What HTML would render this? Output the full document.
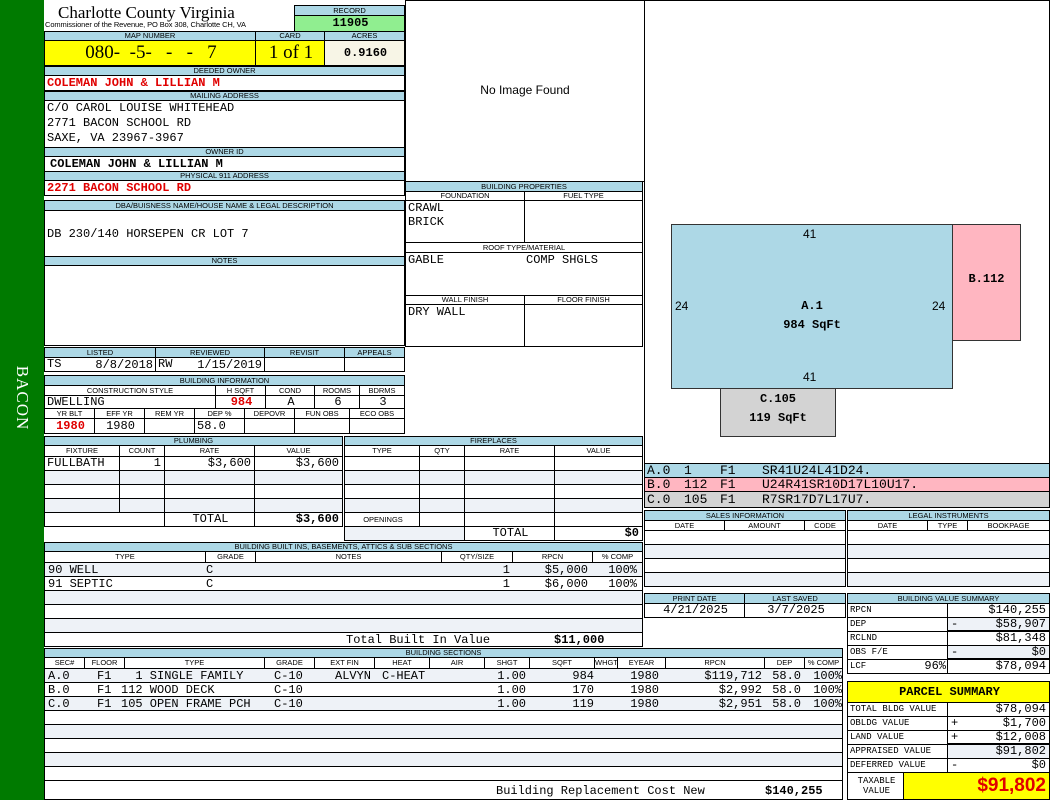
<!DOCTYPE html>
<html><head><meta charset="utf-8"><style>
*{margin:0;padding:0}
body{width:1050px;height:800px;position:relative;background:#fff;overflow:hidden;font-family:"Liberation Sans",sans-serif}
.h,.c,.t{position:absolute;box-sizing:border-box}
.h{background:#add8e6;border:1px solid #000;font-size:7.5px;text-align:center;color:#000;white-space:nowrap;overflow:hidden}
.c{border:1px solid #000;background:#fff;font:12px "Liberation Mono",monospace;white-space:pre;overflow:hidden;padding-left:2px}
.g{background:#eef2f7}
.t{white-space:pre;font:12px "Liberation Mono",monospace}
.r{text-align:right;padding-right:3px}
.ct{text-align:center}
.red{color:#e00000;font-weight:bold}
.b{font-weight:bold}
.s{font-size:9px}
</style></head><body>
<div class="t" style="left:0;top:0;width:44px;height:800px;background:#007a00"></div>
<div class="t" style="left:22px;top:398px;transform:translate(-50%,-50%) rotate(90deg);color:#fff;font:17px 'Liberation Serif',serif;letter-spacing:1px">BACON</div>

<div class="t" style="left:58px;top:3px;font:17px 'Liberation Serif',serif">Charlotte County Virginia</div>
<div class="t" style="left:45px;top:20px;font:7.5px 'Liberation Sans',sans-serif;letter-spacing:-0.1px">Commissioner of the Revenue, PO Box 308, Charlotte CH, VA</div>
<div class="h" style="left:294px;top:5px;width:111px;height:11px;line-height:9px">RECORD</div>
<div class="c ct" style="left:294px;top:15px;width:111px;height:17px;background:#90ee90;font-weight:bold;font-size:12px;line-height:15px">11905</div>

<div class="h" style="left:44px;top:31px;width:212px;height:10px;line-height:8px">MAP NUMBER</div>
<div class="h" style="left:255px;top:31px;width:70px;height:10px;line-height:8px">CARD</div>
<div class="h" style="left:324px;top:31px;width:81px;height:10px;line-height:8px">ACRES</div>
<div class="c ct" style="left:44px;top:40px;width:212px;height:26px;background:#ffff00;font:19px 'Liberation Serif',serif;line-height:24px">080-  -5-   -   -   7</div>
<div class="c ct" style="left:255px;top:40px;width:70px;height:26px;background:#ffff00;font:19px 'Liberation Serif',serif;line-height:24px">1 of 1</div>
<div class="c ct" style="left:324px;top:40px;width:81px;height:26px;background:#f7f5e6;font-weight:bold;line-height:24px">0.9160</div>

<div class="h" style="left:44px;top:66px;width:361px;height:10px;line-height:8px">DEEDED OWNER</div>
<div class="c red" style="left:44px;top:75px;width:361px;height:16px;line-height:14px">COLEMAN JOHN &amp; LILLIAN M</div>
<div class="h" style="left:44px;top:91px;width:361px;height:10px;line-height:8px">MAILING ADDRESS</div>
<div class="c" style="left:44px;top:100px;width:361px;height:48px;line-height:15px">C/O CAROL LOUISE WHITEHEAD
2771 BACON SCHOOL RD
SAXE, VA 23967-3967</div>
<div class="h" style="left:44px;top:147px;width:361px;height:10px;line-height:8px">OWNER ID</div>
<div class="c b" style="left:44px;top:156px;width:361px;height:16px;line-height:14px;padding-left:5px">COLEMAN JOHN &amp; LILLIAN M</div>
<div class="h" style="left:44px;top:171px;width:361px;height:10px;line-height:8px">PHYSICAL 911 ADDRESS</div>
<div class="c red" style="left:44px;top:180px;width:361px;height:16px;line-height:14px">2271 BACON SCHOOL RD</div>

<div class="h" style="left:44px;top:200px;width:361px;height:11px;line-height:9px">DBA/BUISNESS NAME/HOUSE NAME &amp; LEGAL DESCRIPTION</div>
<div class="c" style="left:44px;top:210px;width:361px;height:47px;line-height:47px">DB 230/140 HORSEPEN CR LOT 7</div>
<div class="h" style="left:44px;top:256px;width:361px;height:10px;line-height:8px">NOTES</div>
<div class="c" style="left:44px;top:265px;width:361px;height:81px"></div>

<div class="h" style="left:44px;top:347px;width:112px;height:11px;line-height:9px">LISTED</div>
<div class="h" style="left:155px;top:347px;width:110px;height:11px;line-height:9px">REVIEWED</div>
<div class="h" style="left:264px;top:347px;width:81px;height:11px;line-height:9px">REVISIT</div>
<div class="h" style="left:344px;top:347px;width:61px;height:11px;line-height:9px">APPEALS</div>
<div class="c" style="left:44px;top:357px;width:112px;height:15px;line-height:13px">TS</div>
<div class="t" style="right:897px;top:358px">8/8/2018</div>
<div class="c" style="left:155px;top:357px;width:110px;height:15px;line-height:13px">RW</div>
<div class="t" style="right:788px;top:358px">1/15/2019</div>
<div class="c" style="left:264px;top:357px;width:81px;height:15px"></div>
<div class="c" style="left:344px;top:357px;width:61px;height:15px"></div>

<div class="h" style="left:44px;top:375px;width:361px;height:11px;line-height:9px">BUILDING INFORMATION</div>
<div class="h" style="left:44px;top:385px;width:172px;height:11px;line-height:9px;background:#fff">CONSTRUCTION STYLE</div>
<div class="h" style="left:215px;top:385px;width:51px;height:11px;line-height:9px;background:#fff">H SQFT</div>
<div class="h" style="left:265px;top:385px;width:50px;height:11px;line-height:9px;background:#fff">COND</div>
<div class="h" style="left:314px;top:385px;width:46px;height:11px;line-height:9px;background:#fff">ROOMS</div>
<div class="h" style="left:359px;top:385px;width:46px;height:11px;line-height:9px;background:#fff">BDRMS</div>
<div class="c" style="left:44px;top:395px;width:172px;height:14px;line-height:12px">DWELLING</div>
<div class="c ct red" style="left:215px;top:395px;width:51px;height:14px;line-height:12px">984</div>
<div class="c ct" style="left:265px;top:395px;width:50px;height:14px;line-height:12px">A</div>
<div class="c ct" style="left:314px;top:395px;width:46px;height:14px;line-height:12px">6</div>
<div class="c ct" style="left:359px;top:395px;width:46px;height:14px;line-height:12px">3</div>
<div class="h" style="left:44px;top:408px;width:51px;height:11px;line-height:9px;background:#fff">YR BLT</div>
<div class="h" style="left:94px;top:408px;width:51px;height:11px;line-height:9px;background:#fff">EFF YR</div>
<div class="h" style="left:144px;top:408px;width:51px;height:11px;line-height:9px;background:#fff">REM YR</div>
<div class="h" style="left:194px;top:408px;width:51px;height:11px;line-height:9px;background:#fff">DEP %</div>
<div class="h" style="left:244px;top:408px;width:51px;height:11px;line-height:9px;background:#fff">DEPOVR</div>
<div class="h" style="left:294px;top:408px;width:56px;height:11px;line-height:9px;background:#fff">FUN OBS</div>
<div class="h" style="left:349px;top:408px;width:56px;height:11px;line-height:9px;background:#fff">ECO OBS</div>
<div class="c ct red" style="left:44px;top:418px;width:51px;height:16px;line-height:14px">1980</div>
<div class="c ct" style="left:94px;top:418px;width:51px;height:16px;line-height:14px">1980</div>
<div class="c" style="left:144px;top:418px;width:51px;height:16px"></div>
<div class="c" style="left:194px;top:418px;width:51px;height:16px;line-height:14px">58.0</div>
<div class="c" style="left:244px;top:418px;width:51px;height:16px"></div>
<div class="c" style="left:294px;top:418px;width:56px;height:16px"></div>
<div class="c" style="left:349px;top:418px;width:56px;height:16px"></div>

<div class="h" style="left:44px;top:436px;width:299px;height:10px;line-height:8px">PLUMBING</div>
<div class="h" style="left:44px;top:445px;width:76px;height:12px;line-height:10px;background:#fff">FIXTURE</div>
<div class="h" style="left:119px;top:445px;width:46px;height:12px;line-height:10px;background:#fff">COUNT</div>
<div class="h" style="left:164px;top:445px;width:91px;height:12px;line-height:10px;background:#fff">RATE</div>
<div class="h" style="left:254px;top:445px;width:89px;height:12px;line-height:10px;background:#fff">VALUE</div>
<div class="c" style="left:44px;top:456px;width:76px;height:15px;line-height:13px">FULLBATH</div>
<div class="c r" style="left:119px;top:456px;width:46px;height:15px;line-height:13px">1</div>
<div class="c r" style="left:164px;top:456px;width:91px;height:15px;line-height:13px">$3,600</div>
<div class="c r" style="left:254px;top:456px;width:89px;height:15px;line-height:13px">$3,600</div>
<div class="c g" style="left:44px;top:470px;width:76px;height:15px"></div><div class="c g" style="left:119px;top:470px;width:46px;height:15px"></div><div class="c g" style="left:164px;top:470px;width:91px;height:15px"></div><div class="c g" style="left:254px;top:470px;width:89px;height:15px"></div>
<div class="c" style="left:44px;top:484px;width:76px;height:15px"></div><div class="c" style="left:119px;top:484px;width:46px;height:15px"></div><div class="c" style="left:164px;top:484px;width:91px;height:15px"></div><div class="c" style="left:254px;top:484px;width:89px;height:15px"></div>
<div class="c g" style="left:44px;top:498px;width:76px;height:15px"></div><div class="c g" style="left:119px;top:498px;width:46px;height:15px"></div><div class="c g" style="left:164px;top:498px;width:91px;height:15px"></div><div class="c g" style="left:254px;top:498px;width:89px;height:15px"></div>
<div class="c" style="left:44px;top:512px;width:121px;height:15px"></div>
<div class="c ct" style="left:164px;top:512px;width:91px;height:15px;line-height:13px">TOTAL</div>
<div class="c r b" style="left:254px;top:512px;width:89px;height:15px;line-height:13px">$3,600</div>

<div class="h" style="left:344px;top:436px;width:299px;height:10px;line-height:8px">FIREPLACES</div>
<div class="h" style="left:344px;top:445px;width:76px;height:12px;line-height:10px;background:#fff">TYPE</div>
<div class="h" style="left:419px;top:445px;width:46px;height:12px;line-height:10px;background:#fff">QTY</div>
<div class="h" style="left:464px;top:445px;width:91px;height:12px;line-height:10px;background:#fff">RATE</div>
<div class="h" style="left:554px;top:445px;width:89px;height:12px;line-height:10px;background:#fff">VALUE</div>
<div class="c" style="left:344px;top:456px;width:76px;height:15px"></div><div class="c" style="left:419px;top:456px;width:46px;height:15px"></div><div class="c" style="left:464px;top:456px;width:91px;height:15px"></div><div class="c" style="left:554px;top:456px;width:89px;height:15px"></div>
<div class="c g" style="left:344px;top:470px;width:76px;height:15px"></div><div class="c g" style="left:419px;top:470px;width:46px;height:15px"></div><div class="c g" style="left:464px;top:470px;width:91px;height:15px"></div><div class="c g" style="left:554px;top:470px;width:89px;height:15px"></div>
<div class="c" style="left:344px;top:484px;width:76px;height:15px"></div><div class="c" style="left:419px;top:484px;width:46px;height:15px"></div><div class="c" style="left:464px;top:484px;width:91px;height:15px"></div><div class="c" style="left:554px;top:484px;width:89px;height:15px"></div>
<div class="c g" style="left:344px;top:498px;width:76px;height:15px"></div><div class="c g" style="left:419px;top:498px;width:46px;height:15px"></div><div class="c g" style="left:464px;top:498px;width:91px;height:15px"></div><div class="c g" style="left:554px;top:498px;width:89px;height:15px"></div>
<div class="c ct" style="left:344px;top:512px;width:76px;height:15px;font:7.5px 'Liberation Sans';line-height:13px">OPENINGS</div><div class="c" style="left:419px;top:512px;width:46px;height:15px"></div><div class="c" style="left:464px;top:512px;width:91px;height:15px"></div><div class="c" style="left:554px;top:512px;width:89px;height:15px"></div>
<div class="c g" style="left:344px;top:526px;width:121px;height:15px"></div>
<div class="c ct" style="left:464px;top:526px;width:91px;height:15px;line-height:13px">TOTAL</div>
<div class="c r b" style="left:554px;top:526px;width:89px;height:15px;line-height:13px">$0</div>

<div class="h" style="left:44px;top:542px;width:599px;height:10px;line-height:8px">BUILDING BUILT INS, BASEMENTS, ATTICS &amp; SUB SECTIONS</div>
<div class="h" style="left:44px;top:551px;width:162px;height:12px;line-height:10px;background:#fff">TYPE</div>
<div class="h" style="left:205px;top:551px;width:51px;height:12px;line-height:10px;background:#fff">GRADE</div>
<div class="h" style="left:255px;top:551px;width:187px;height:12px;line-height:10px;background:#fff">NOTES</div>
<div class="h" style="left:441px;top:551px;width:72px;height:12px;line-height:10px;background:#fff">QTY/SIZE</div>
<div class="h" style="left:512px;top:551px;width:81px;height:12px;line-height:10px;background:#fff">RPCN</div>
<div class="h" style="left:592px;top:551px;width:51px;height:12px;line-height:10px;background:#fff">% COMP</div>
<div class="c" style="left:44px;top:562px;width:599px;height:15px;background:#eef2f7"></div>
<div class="c" style="left:44px;top:576px;width:599px;height:15px"></div>
<div class="t" style="left:48px;top:563px">90 WELL</div><div class="t" style="left:206px;top:563px">C</div><div class="t" style="right:540px;top:563px">1</div><div class="t" style="right:462px;top:563px">$5,000</div><div class="t" style="right:413px;top:563px">100%</div>
<div class="t" style="left:48px;top:577px">91 SEPTIC</div><div class="t" style="left:206px;top:577px">C</div><div class="t" style="right:540px;top:577px">1</div><div class="t" style="right:462px;top:577px">$6,000</div><div class="t" style="right:413px;top:577px">100%</div>
<div class="c g" style="left:44px;top:590px;width:599px;height:15px"></div>
<div class="c" style="left:44px;top:604px;width:599px;height:15px"></div>
<div class="c g" style="left:44px;top:618px;width:599px;height:15px"></div>
<div class="c" style="left:44px;top:632px;width:599px;height:15px"></div>
<div class="t" style="left:346px;top:633px">Total Built In Value</div>
<div class="t b" style="left:554px;top:633px">$11,000</div>

<div class="h" style="left:44px;top:648px;width:799px;height:10px;line-height:8px">BUILDING SECTIONS</div>
<div class="h" style="left:44px;top:657px;width:41px;height:12px;line-height:10px;background:#fff">SEC#</div>
<div class="h" style="left:84px;top:657px;width:41px;height:12px;line-height:10px;background:#fff">FLOOR</div>
<div class="h" style="left:124px;top:657px;width:141px;height:12px;line-height:10px;background:#fff">TYPE</div>
<div class="h" style="left:264px;top:657px;width:51px;height:12px;line-height:10px;background:#fff">GRADE</div>
<div class="h" style="left:314px;top:657px;width:61px;height:12px;line-height:10px;background:#fff">EXT FIN</div>
<div class="h" style="left:374px;top:657px;width:56px;height:12px;line-height:10px;background:#fff">HEAT</div>
<div class="h" style="left:429px;top:657px;width:56px;height:12px;line-height:10px;background:#fff">AIR</div>
<div class="h" style="left:484px;top:657px;width:46px;height:12px;line-height:10px;background:#fff">SHGT</div>
<div class="h" style="left:529px;top:657px;width:66px;height:12px;line-height:10px;background:#fff">SQFT</div>
<div class="h" style="left:594px;top:657px;width:24px;height:12px;line-height:10px;background:#fff">WHGT</div>
<div class="h" style="left:617px;top:657px;width:49px;height:12px;line-height:10px;background:#fff">EYEAR</div>
<div class="h" style="left:665px;top:657px;width:100px;height:12px;line-height:10px;background:#fff">RPCN</div>
<div class="h" style="left:764px;top:657px;width:41px;height:12px;line-height:10px;background:#fff">DEP</div>
<div class="h" style="left:804px;top:657px;width:39px;height:12px;line-height:10px;background:#fff">% COMP</div>
<div class="c g" style="left:44px;top:668px;width:799px;height:15px"></div>
<div class="c" style="left:44px;top:682px;width:799px;height:15px"></div>
<div class="c g" style="left:44px;top:696px;width:799px;height:15px"></div>
<div class="c" style="left:44px;top:710px;width:799px;height:15px"></div>
<div class="c g" style="left:44px;top:724px;width:799px;height:15px"></div>
<div class="c" style="left:44px;top:738px;width:799px;height:15px"></div>
<div class="c g" style="left:44px;top:752px;width:799px;height:15px"></div>
<div class="c" style="left:44px;top:766px;width:799px;height:15px"></div>
<div class="c" style="left:44px;top:780px;width:799px;height:20px"></div>

<div class="t" style="left:48px;top:669px">A.0</div><div class="t" style="left:97px;top:669px">F1</div><div class="t" style="left:121px;top:669px">  1 SINGLE FAMILY</div><div class="t" style="left:274px;top:669px">C-10</div><div class="t" style="left:335px;top:669px">ALVYN</div><div class="t" style="left:382px;top:669px">C-HEAT</div><div class="t" style="right:524px;top:669px">1.00</div><div class="t" style="right:456px;top:669px">984</div><div class="t" style="right:391px;top:669px">1980</div><div class="t" style="right:288px;top:669px">$119,712</div><div class="t" style="right:249px;top:669px">58.0</div><div class="t" style="right:208px;top:669px">100%</div>
<div class="t" style="left:48px;top:683px">B.0</div><div class="t" style="left:97px;top:683px">F1</div><div class="t" style="left:121px;top:683px">112 WOOD DECK</div><div class="t" style="left:274px;top:683px">C-10</div><div class="t" style="right:524px;top:683px">1.00</div><div class="t" style="right:456px;top:683px">170</div><div class="t" style="right:391px;top:683px">1980</div><div class="t" style="right:288px;top:683px">$2,992</div><div class="t" style="right:249px;top:683px">58.0</div><div class="t" style="right:208px;top:683px">100%</div>
<div class="t" style="left:48px;top:697px">C.0</div><div class="t" style="left:97px;top:697px">F1</div><div class="t" style="left:121px;top:697px">105 OPEN FRAME PCH</div><div class="t" style="left:274px;top:697px">C-10</div><div class="t" style="right:524px;top:697px">1.00</div><div class="t" style="right:456px;top:697px">119</div><div class="t" style="right:391px;top:697px">1980</div><div class="t" style="right:288px;top:697px">$2,951</div><div class="t" style="right:249px;top:697px">58.0</div><div class="t" style="right:208px;top:697px">100%</div>
<div class="t" style="left:496px;top:784px">Building Replacement Cost New</div>
<div class="t b" style="left:765px;top:784px">$140,255</div>

<div class="c" style="left:405px;top:0;width:240px;height:182px"></div>
<div class="t" style="left:405px;top:83px;width:240px;text-align:center;font:12px 'Liberation Sans',sans-serif">No Image Found</div>
<div class="c" style="left:644px;top:0;width:406px;height:464px"></div>
<div class="t" style="left:671px;top:224px;width:282px;height:165px;background:#add8e6;border:1px solid #333"></div>
<div class="t" style="left:952px;top:224px;width:69px;height:117px;background:#ffb6c1;border:1px solid #333"></div>
<div class="t" style="left:720px;top:388px;width:116px;height:49px;background:#d3d3d3;border:1px solid #333"></div>
<div class="t" style="left:803px;top:227px;font:12px 'Liberation Sans'">41</div>
<div class="t" style="left:803px;top:370px;font:12px 'Liberation Sans'">41</div>
<div class="t" style="left:675px;top:299px;font:12px 'Liberation Sans'">24</div>
<div class="t" style="left:932px;top:299px;font:12px 'Liberation Sans'">24</div>
<div class="t b" style="left:671px;top:297px;width:282px;text-align:center;font-size:12px;line-height:19px">A.1
984 SqFt</div>
<div class="t b" style="left:952px;top:272px;width:69px;text-align:center;font-size:12px">B.112</div>
<div class="t b" style="left:720px;top:390px;width:116px;text-align:center;font-size:12px;line-height:19px">C.105
119 SqFt</div>

<div class="c" style="left:644px;top:463px;width:406px;height:15px;background:#add8e6"></div>
<div class="c" style="left:644px;top:477px;width:406px;height:15px;background:#ffb6c1"></div>
<div class="c" style="left:644px;top:491px;width:406px;height:17px;background:#d3d3d3"></div>
<div class="t" style="left:647px;top:463px;font-size:13px">A.0</div><div class="t" style="left:684px;top:463px;font-size:13px">1</div><div class="t" style="left:720px;top:463px;font-size:13px">F1</div><div class="t" style="left:762px;top:463px;font-size:13px">SR41U24L41D24.</div>
<div class="t" style="left:647px;top:477px;font-size:13px">B.0</div><div class="t" style="left:684px;top:477px;font-size:13px">112</div><div class="t" style="left:720px;top:477px;font-size:13px">F1</div><div class="t" style="left:762px;top:477px;font-size:13px">U24R41SR10D17L10U17.</div>
<div class="t" style="left:647px;top:492px;font-size:13px">C.0</div><div class="t" style="left:684px;top:492px;font-size:13px">105</div><div class="t" style="left:720px;top:492px;font-size:13px">F1</div><div class="t" style="left:762px;top:492px;font-size:13px">R7SR17D7L17U7.</div>

<div class="h" style="left:405px;top:181px;width:238px;height:11px;line-height:9px">BUILDING PROPERTIES</div>
<div class="h" style="left:405px;top:191px;width:120px;height:10px;line-height:8px;background:#fff">FOUNDATION</div>
<div class="h" style="left:524px;top:191px;width:119px;height:10px;line-height:8px;background:#fff">FUEL TYPE</div>
<div class="c" style="left:405px;top:200px;width:120px;height:43px;line-height:14px">CRAWL
BRICK</div>
<div class="c" style="left:524px;top:200px;width:119px;height:43px"></div>
<div class="h" style="left:405px;top:242px;width:238px;height:11px;line-height:9px;background:#fff">ROOF TYPE/MATERIAL</div>
<div class="c" style="left:405px;top:252px;width:238px;height:44px;line-height:14px">GABLE</div>
<div class="t" style="left:526px;top:253px">COMP SHGLS</div>
<div class="h" style="left:405px;top:295px;width:120px;height:10px;line-height:8px;background:#fff">WALL FINISH</div>
<div class="h" style="left:524px;top:295px;width:119px;height:10px;line-height:8px;background:#fff">FLOOR FINISH</div>
<div class="c" style="left:405px;top:304px;width:120px;height:43px;line-height:14px">DRY WALL</div>
<div class="c" style="left:524px;top:304px;width:119px;height:43px"></div>

<div class="h" style="left:644px;top:510px;width:202px;height:11px;line-height:9px">SALES INFORMATION</div>
<div class="h" style="left:644px;top:520px;width:81px;height:11px;line-height:9px;background:#fff">DATE</div>
<div class="h" style="left:724px;top:520px;width:81px;height:11px;line-height:9px;background:#fff">AMOUNT</div>
<div class="h" style="left:804px;top:520px;width:42px;height:11px;line-height:9px;background:#fff">CODE</div>
<div class="c" style="left:644px;top:530px;width:202px;height:15px"></div>
<div class="c g" style="left:644px;top:544px;width:202px;height:15px"></div>
<div class="c" style="left:644px;top:558px;width:202px;height:15px"></div>
<div class="c g" style="left:644px;top:572px;width:202px;height:15px"></div>
<div class="h" style="left:847px;top:510px;width:203px;height:11px;line-height:9px">LEGAL INSTRUMENTS</div>
<div class="h" style="left:847px;top:520px;width:81px;height:11px;line-height:9px;background:#fff">DATE</div>
<div class="h" style="left:927px;top:520px;width:41px;height:11px;line-height:9px;background:#fff">TYPE</div>
<div class="h" style="left:967px;top:520px;width:83px;height:11px;line-height:9px;background:#fff">BOOKPAGE</div>
<div class="c" style="left:847px;top:530px;width:203px;height:15px"></div>
<div class="c g" style="left:847px;top:544px;width:203px;height:15px"></div>
<div class="c" style="left:847px;top:558px;width:203px;height:15px"></div>
<div class="c g" style="left:847px;top:572px;width:203px;height:15px"></div>

<div class="h" style="left:644px;top:593px;width:101px;height:11px;line-height:9px">PRINT DATE</div>
<div class="h" style="left:744px;top:593px;width:102px;height:11px;line-height:9px">LAST SAVED</div>
<div class="c ct" style="left:644px;top:603px;width:101px;height:15px;line-height:13px">4/21/2025</div>
<div class="c ct" style="left:744px;top:603px;width:102px;height:15px;line-height:13px">3/7/2025</div>

<div class="h" style="left:847px;top:593px;width:203px;height:11px;line-height:9px">BUILDING VALUE SUMMARY</div>
<div class="c s" style="left:847px;top:603px;width:101px;height:15px;line-height:13px">RPCN</div><div class="c r" style="left:947px;top:603px;width:103px;height:15px;line-height:13px">$140,255</div>
<div class="c s" style="left:847px;top:617px;width:101px;height:15px;line-height:13px">DEP</div><div class="c r g" style="left:947px;top:617px;width:103px;height:15px;line-height:13px;border-bottom:2px solid #000">$58,907</div>
<div class="c s" style="left:847px;top:631px;width:101px;height:15px;line-height:13px">RCLND</div><div class="c r" style="left:947px;top:631px;width:103px;height:15px;line-height:13px">$81,348</div>
<div class="c s" style="left:847px;top:645px;width:101px;height:15px;line-height:13px">OBS F/E</div><div class="c r g" style="left:947px;top:645px;width:103px;height:15px;line-height:13px;border-bottom:2px solid #000">$0</div>
<div class="c s" style="left:847px;top:659px;width:101px;height:15px;line-height:13px">LCF</div><div class="t" style="right:104px;top:659px">96%</div><div class="c r" style="left:947px;top:659px;width:103px;height:15px;line-height:13px">$78,094</div>
<div class="t" style="left:951px;top:617px">-</div><div class="t" style="left:951px;top:645px">-</div>

<div class="c ct b" style="left:847px;top:681px;width:203px;height:22px;background:#ffff00;line-height:20px;font-size:12px">PARCEL SUMMARY</div>
<div class="c s" style="left:847px;top:702px;width:101px;height:15px;line-height:13px">TOTAL BLDG VALUE</div><div class="c r" style="left:947px;top:702px;width:103px;height:15px;line-height:13px">$78,094</div>
<div class="c s" style="left:847px;top:716px;width:101px;height:15px;line-height:13px">OBLDG VALUE</div><div class="c r" style="left:947px;top:716px;width:103px;height:15px;line-height:13px">$1,700</div>
<div class="c s" style="left:847px;top:730px;width:101px;height:15px;line-height:13px">LAND VALUE</div><div class="c r" style="left:947px;top:730px;width:103px;height:15px;line-height:13px;border-bottom:2px solid #000">$12,008</div>
<div class="c s" style="left:847px;top:744px;width:101px;height:15px;line-height:13px">APPRAISED VALUE</div><div class="c r g" style="left:947px;top:744px;width:103px;height:15px;line-height:13px">$91,802</div>
<div class="c s" style="left:847px;top:758px;width:101px;height:15px;line-height:13px">DEFERRED VALUE</div><div class="c r" style="left:947px;top:758px;width:103px;height:15px;line-height:13px">$0</div>
<div class="t" style="left:951px;top:716px">+</div><div class="t" style="left:951px;top:730px">+</div><div class="t" style="left:951px;top:758px">-</div>
<div class="c ct" style="left:847px;top:772px;width:57px;height:28px;font:9px 'Liberation Mono';line-height:10px;padding-top:3px">TAXABLE
VALUE</div>
<div class="c r" style="left:903px;top:772px;width:147px;height:28px;background:#ffff00;color:#e00000;font:bold 19px 'Liberation Sans';line-height:26px">$91,802</div>
</body></html>
